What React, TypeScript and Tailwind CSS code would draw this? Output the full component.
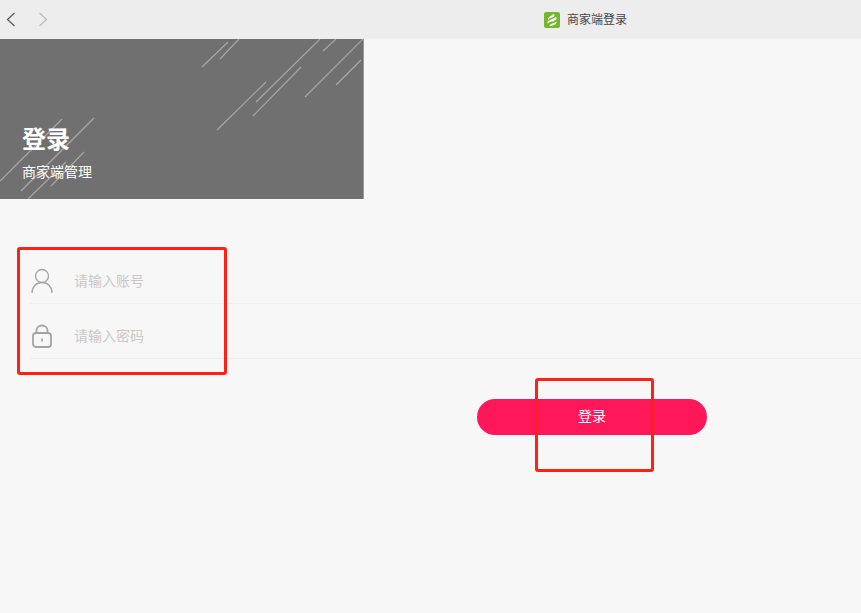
const FONT = "font-['Liberation_Sans','Noto_Sans_CJK_SC',sans-serif]";

const streaks = [
  [202, 28, 228, 3],
  [220, 20, 239, 0],
  [256, 63, 320, 0],
  [253, 77, 301, 28],
  [217, 91, 266, 43],
  [323, 12, 336, 0],
  [305, 58, 363, 0],
  [336, 46, 361, 21],
  [0, 142, 62, 80],
  [21, 152, 94, 79],
  [28, 160, 66, 123],
  [51, 147, 84, 113],
];

function Logo() {
  return (
    <svg width="16" height="16" viewBox="0 0 16 16" className="shrink-0">
      <rect width="16" height="16" rx="2" fill="#74b72e" />
      <path d="M4 8C3.500 5 7 4.500 8.500 2.500C10 2 10.500 2.500 10.500 3.500C9.500 6 5.500 5.500 4 8Z" fill="#fff" />
      <path d="M3.500 11.500C3 8 8 8 11 5.500C12.500 5 13 6 12.500 7C11 10 6 9 3.500 11.500Z" fill="#fff" />
      <path d="M5.500 14C6 11.500 10 11.500 12.500 9.500C13 11.500 10 14 5.500 14Z" fill="#fff" />
    </svg>
  );
}

function UserIcon() {
  return (
    <svg width="22" height="26" viewBox="0 0 22 26" fill="none" stroke="#a3a3a3" strokeWidth="1.300">
      <circle cx="11" cy="8" r="6.500" />
      <path d="M1 25C1 19 5 14.500 11 14.500S21 19 21 25" />
    </svg>
  );
}

function LockIcon() {
  return (
    <svg width="22" height="24" viewBox="0 0 22 24" fill="none" stroke="#a3a3a3" strokeWidth="1.800">
      <path d="M5.500 9V6.500C5.500 3.500 8 1.500 11 1.500S16.500 3.500 16.500 6.500V9" />
      <rect x="2" y="9" width="18" height="14" rx="3" />
      <path d="M11 14.500V17.500" />
    </svg>
  );
}

function Field({ icon, placeholder }: { icon: React.ReactNode; placeholder: string }) {
  return (
    <div className="flex h-[55px] items-center border-b border-[#eeeeee] pt-[10px]">
      <div className="flex w-[44px] shrink-0 pl-px">{icon}</div>
      <span className="text-[14px] text-[#c8c8c8]">{placeholder}</span>
    </div>
  );
}

export default function App() {
  return (
    <div className={`relative h-[613px] w-[861px] overflow-hidden bg-[#f7f7f7] ${FONT}`}>
      <header className="flex h-[39px] items-center bg-[#ededed]">
        <svg width="12" height="16" viewBox="0 0 12 16" fill="none" stroke="#555555" strokeWidth="1.200" className="ml-[5px]">
          <path d="M9.500 1L2.500 7.500L9.500 14" />
        </svg>
        <svg width="12" height="16" viewBox="0 0 12 16" fill="none" stroke="#bbbbbb" strokeWidth="1.200" className="ml-[20px]">
          <path d="M2.500 1L9.500 7.500L2.500 14" />
        </svg>
        <div className="ml-[495px] flex items-center gap-[7px] text-[12px] text-[#444444]">
          <Logo />
          <span>商家端登录</span>
        </div>
      </header>

      <section className="relative h-[160px] w-[364px] border-r border-[#999999] bg-[#707070] pl-[22px] pt-[84px] text-white">
        <svg width="363" height="160" viewBox="0 0 363 160" fill="none" stroke="#a8a8a8" strokeWidth="1.150" className="absolute left-0 top-0">
          {streaks.map(([x1, y1, x2, y2], i) => (
            <line key={i} x1={x1} y1={y1} x2={x2} y2={y2} />
          ))}
        </svg>
        <h1 className="relative text-[24px] font-bold leading-[34px]">登录</h1>
        <p className="relative mt-[5px] text-[14px] leading-[20px]">商家端管理</p>
      </section>

      <form className="pl-[30px] pt-[50px]">
        <Field icon={<UserIcon />} placeholder="请输入账号" />
        <Field icon={<LockIcon />} placeholder="请输入密码" />
        <button
          type="button"
          className="ml-[447px] mt-[40px] block h-[36px] w-[230px] rounded-full bg-[#ff1859] pb-px text-[14px] text-white"
        >
          登录
        </button>
      </form>

      <div className="absolute left-[17px] top-[247px] h-[128px] w-[210px] rounded-[3px] border-[3px] border-[#ff2116]" />
      <div className="absolute left-[535px] top-[378px] h-[94px] w-[119px] rounded-[3px] border-[3px] border-[#ff2116]" />
    </div>
  );
}
